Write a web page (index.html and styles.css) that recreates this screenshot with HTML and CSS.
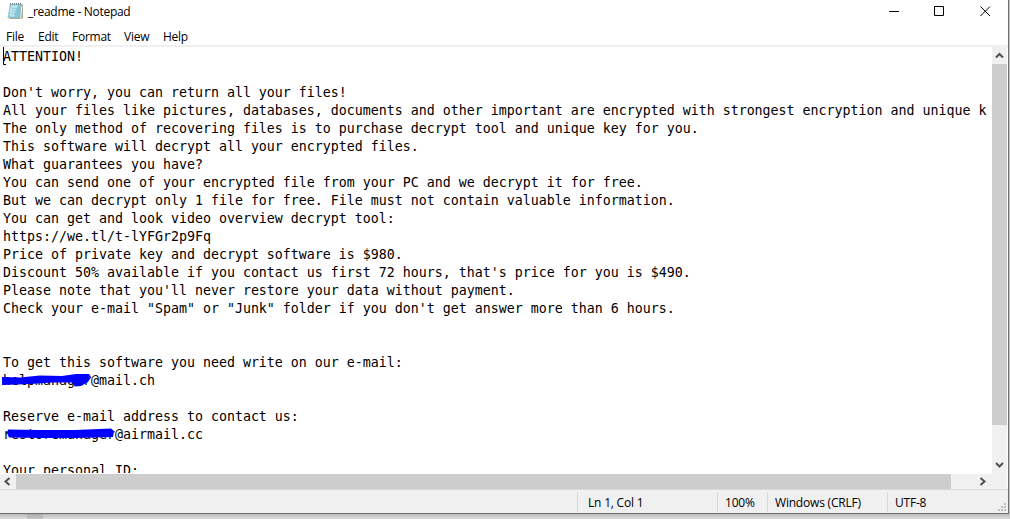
FILE: index.html
```html
<!DOCTYPE html>
<html lang="en">
<head>
    <meta charset="UTF-8">
    <title>_readme - Notepad</title>
    <link rel="stylesheet" href="styles.css">
</head>
<body>
    <div class="window">
        <div class="title-bar">
            <svg class="app-icon" width="17" height="18" viewBox="0 0 17 18">
                <path d="M4 2.500h12v13l-1.500 1.500H2z" fill="#b5a988"/>
                <path d="M3 2h12l-1.500 14H0.500z" fill="#86c5d6"/>
                <path d="M4 3h7L7 14.500H2z" fill="#b9e2ed"/>
                <path d="M5 6.500h8M4.700 9h8M4.300 11.500h8" stroke="#79b9ca" stroke-width="0.500"/>
                <path d="M3 2h12" stroke="#6f8f99" stroke-width="2" stroke-dasharray="1 1"/>
                <path d="M14.800 4l-1.100 12.500" stroke="#f4f1e6"/>
            </svg>
            <span class="title">_readme - Notepad</span>
            <div class="window-buttons">
                <svg width="11" height="11" viewBox="0 0 11 11"><path d="M1 5.500h10"/></svg>
                <svg width="11" height="11" viewBox="0 0 11 11"><path d="M0.500 0.500h9v9h-9z"/></svg>
                <svg width="11" height="11" viewBox="0 0 11 11"><path d="M0.500 0.500l9.500 9.500M10 0.500l-9.500 9.500"/></svg>
            </div>
        </div>

        <div class="menu-bar">
            <span class="file">File</span>
            <span class="edit">Edit</span>
            <span class="format">Format</span>
            <span class="view">View</span>
            <span class="help">Help</span>
        </div>

        <div class="editor">
            <div class="text-area">
<pre class="text">ATTENTION!

Don't worry, you can return all your files!
All your files like pictures, databases, documents and other important are encrypted with strongest encryption and unique k
The only method of recovering files is to purchase decrypt tool and unique key for you.
This software will decrypt all your encrypted files.
What guarantees you have?
You can send one of your encrypted file from your PC and we decrypt it for free.
But we can decrypt only 1 file for free. File must not contain valuable information.
You can get and look video overview decrypt tool:
https://we.tl/t-lYFGr2p9Fq
Price of private key and decrypt software is $980.
Discount 50% available if you contact us first 72 hours, that's price for you is $490.
Please note that you'll never restore your data without payment.
Check your e-mail "Spam" or "Junk" folder if you don't get answer more than 6 hours.


To get this software you need write on our e-mail:
helpmanager@mail.ch

Reserve e-mail address to contact us:
restoremanager@airmail.cc

Your personal ID:</pre>
                <svg class="caret" width="3" height="18" viewBox="0 0 3 18"><path d="M0.500 0v17.500h2.500" fill="none" stroke="#000"/></svg>
                <svg class="marker" width="120" height="70" viewBox="0 0 120 70">
                    <path d="M2 7L20 7.500L40 5.500L62 6L76 4L89 4L91 7L88 12L81 16L75 16.500L72 12.500L52 12.500L30 14L18 14.500L2 15z"/>
                    <path d="M8 59.500L40 60L75 60L111 58.500L114 61L113 67L76 68L42 68L9 67.500L7 63z"/>
                </svg>
            </div>
            <div class="scroll-v">
                <svg width="15" height="17" viewBox="0 0 15 17"><path d="M4 10.500l3.500-3.500 3.500 3.500"/></svg>
                <div class="thumb-v"></div>
                <svg width="15" height="17" viewBox="0 0 15 17"><path d="M4 6l3.500 3.500 3.500-3.500"/></svg>
            </div>
        </div>

        <div class="scroll-h">
            <svg width="16" height="15" viewBox="0 0 16 15"><path d="M9.500 4l-4 3.500 4 3.500"/></svg>
            <div class="thumb-h"></div>
            <svg width="17" height="15" viewBox="0 0 17 15"><path d="M6.500 4l4 3.500-4 3.500"/></svg>
        </div>

        <div class="status-bar">
            <div class="cell position"><span>Ln 1, Col 1</span></div>
            <div class="cell zoom"><span>100%</span></div>
            <div class="cell line-end"><span>Windows (CRLF)</span></div>
            <div class="cell encoding"><span>UTF-8</span></div>
            <svg class="grip" width="8" height="8" viewBox="0 0 8 8"><path d="M6 0h2v2h-2zM3 3h2v2h-2zM6 3h2v2h-2zM0 6h2v2h-2zM3 6h2v2h-2zM6 6h2v2h-2z"/></svg>
        </div>
    </div>
    <div class="desktop"><div class="desktop-item"></div></div>
</body>
</html>
```
FILE: styles.css
```css
* {
    box-sizing: border-box;
}

body {
    margin: 0;
    width: 1010px;
    height: 519px;
    overflow: hidden;
    background-color: #c4c4c4;
    font-family: "Open Sans", "Noto Sans", sans-serif;
    font-size: 12px;
    color: #000;
}

.window {
    display: flex;
    flex-direction: column;
    width: 1009px;
    height: 514px;
    background-color: #fff;
    border-right: 1px solid #707070;
    border-bottom: 1px solid #707070;
}

.title-bar {
    display: flex;
    height: 27px;
    padding: 2px 17px 0 7px;
}

.title {
    margin-left: 4px;
    line-height: 20px;
    letter-spacing: -0.3px;
}

.window-buttons {
    display: flex;
    gap: 35px;
    margin: 4px 0 0 auto;
}

.window-buttons path {
    fill: none;
    stroke: #000;
}

.menu-bar {
    display: flex;
    height: 20px;
    padding-left: 6px;
    line-height: 20px;
    letter-spacing: -0.25px;
    border-bottom: 2px solid #f0f0f0;
}

.file {
    width: 32px;
}

.edit {
    width: 34px;
}

.format {
    width: 52px;
}

.view {
    width: 39px;
}

.editor {
    display: flex;
    height: 427px;
}

.text-area {
    position: relative;
    width: 987px;
    height: 426px;
    margin-right: 5px;
    overflow: hidden;
}

.text {
    margin: 0;
    padding: 1px 0 0 3px;
    font-family: "DejaVu Sans Mono", monospace;
    font-size: 13.29px;
    line-height: 18px;
}

.caret {
    position: absolute;
    left: 3px;
    top: 0;
}

.marker {
    position: absolute;
    left: 0;
    top: 323px;
    fill: #00f;
}

.scroll-v {
    display: flex;
    flex-direction: column;
    justify-content: space-between;
    width: 15px;
    background-color: #f0f0f0;
}

.scroll-v path,
.scroll-h path {
    fill: none;
    stroke: #505050;
    stroke-width: 2;
}

.thumb-v {
    height: 361px;
    margin-bottom: auto;
    background-color: #cdcdcd;
}

.scroll-h {
    display: flex;
    height: 15px;
    width: 1007px;
    padding-right: 16px;
    background-color: #f0f0f0;
}

.thumb-h {
    width: 935px;
    margin-right: auto;
    background-color: #cdcdcd;
}

.status-bar {
    display: flex;
    position: relative;
    height: 24px;
    padding: 2px 0 1px 577px;
    background-color: #f0f0f0;
    border-top: 1px solid #d7d7d7;
}

.cell {
    border-left: 1px solid #d7d7d7;
    line-height: 21px;
    padding-left: 7px;
    letter-spacing: -0.2px;
}

.position {
    width: 140px;
    padding-left: 10px;
}

.zoom {
    width: 50px;
}

.line-end {
    width: 120px;
}

.encoding {
    width: 120px;
}

.grip {
    position: absolute;
    right: 2px;
    bottom: 2px;
    fill: #bfbfbf;
}

.desktop {
    height: 5px;
    padding-left: 27px;
    background: linear-gradient(#bcbcbc, #dcdcdc);
}

.desktop-item {
    width: 16px;
    height: 5px;
    background: linear-gradient(#acacac, #c6c6c6);
}
```
